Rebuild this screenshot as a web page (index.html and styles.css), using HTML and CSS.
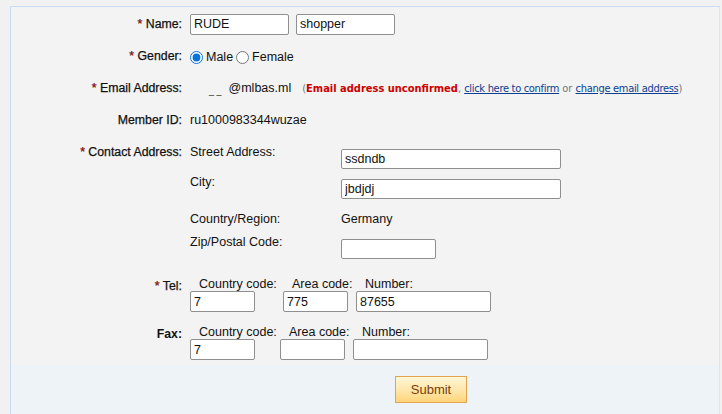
FILE: index.html
```html
<!DOCTYPE html>
<html lang="en">
<head>
    <meta charset="UTF-8">
    <meta name="viewport" content="width=device-width, initial-scale=1.0">
    <title>My Account - Edit Profile</title>
    <link rel="stylesheet" href="styles.css">
</head>
<body>
    <div class="panel">
        <form class="profile-form">
            <div class="row">
                <label class="field-label"><span class="req">*</span> Name:</label>
                <div class="field">
                    <input class="txt txt-name" type="text" value="RUDE">
                    <input class="txt txt-name" type="text" value="shopper">
                </div>
            </div>

            <div class="row">
                <label class="field-label"><span class="req">*</span> Gender:</label>
                <div class="field">
                    <label class="radio"><input type="radio" name="gender" checked>Male</label>
                    <label class="radio"><input type="radio" name="gender">Female</label>
                </div>
            </div>

            <div class="row">
                <label class="field-label"><span class="req">*</span> Email Address:</label>
                <div class="field">
                    <span class="email-value"><span class="email-user">_ _</span>@mlbas.ml</span>
                    <span class="email-note">(<span class="warn">Email address unconfirmed</span>, <a href="#">click here to confirm</a> or <a href="#">change email address</a>)</span>
                </div>
            </div>

            <div class="row">
                <label class="field-label">Member ID:</label>
                <div class="field member-id">ru1000983344wuzae</div>
            </div>

            <div class="row row-top row-address">
                <label class="field-label"><span class="req">*</span> Contact Address:</label>
                <div class="address">
                    <span class="sub-label">Street Address:</span>
                    <input class="txt txt-long" type="text" value="ssdndb">
                    <span class="sub-label">City:</span>
                    <input class="txt txt-long" type="text" value="jbdjdj">
                    <span class="sub-label sub-label-mid">Country/Region:</span>
                    <span class="country">Germany</span>
                    <span class="sub-label">Zip/Postal Code:</span>
                    <input class="txt txt-zip" type="text" value="">
                </div>
            </div>

            <div class="row row-top row-phone">
                <label class="field-label"><span class="req">*</span> Tel:</label>
                <div class="phone">
                    <div class="phone-part part-country">
                        <span class="part-label">Country code:</span>
                        <input class="txt txt-code" type="text" value="7">
                    </div>
                    <div class="phone-part part-area">
                        <span class="part-label">Area code:</span>
                        <input class="txt txt-code" type="text" value="775">
                    </div>
                    <div class="phone-part">
                        <span class="part-label">Number:</span>
                        <input class="txt txt-number" type="text" value="87655">
                    </div>
                </div>
            </div>

            <div class="row row-top row-fax">
                <label class="field-label label-bold">Fax:</label>
                <div class="phone">
                    <div class="phone-part part-country part-fax">
                        <span class="part-label">Country code:</span>
                        <input class="txt txt-code" type="text" value="7">
                    </div>
                    <div class="phone-part part-area">
                        <span class="part-label">Area code:</span>
                        <input class="txt txt-code" type="text" value="">
                    </div>
                    <div class="phone-part">
                        <span class="part-label">Number:</span>
                        <input class="txt txt-number" type="text" value="">
                    </div>
                </div>
            </div>
        </form>

        <div class="actions">
            <button class="submit-btn" type="button">Submit</button>
        </div>
    </div>
</body>
</html>
```

FILE: styles.css
```css
body {
    margin: 0;
    padding: 6px 2px 0 10px;
    background: #f1f1f1;
    font-family: 'Liberation Sans', Arial, sans-serif;
    font-size: 12.5px;
    color: #111111;
}

.panel {
    border: 1px solid #c9dbef;
    border-right-color: #dde6f0;
    background: #f3f3f3;
    height: 420px;
    box-sizing: border-box;
}

.profile-form {
    padding-top: 1px;
}

.row {
    display: flex;
    align-items: center;
    min-height: 32px;
}

.row-top {
    align-items: flex-start;
}

.field-label {
    width: 171px;
    flex-shrink: 0;
    padding-right: 8px;
    text-align: right;
    font-size: 12.3px;
    color: #111111;
    -webkit-text-stroke: 0.25px #111111;
}

.label-bold {
    font-weight: bold;
    -webkit-text-stroke: 0;
}

.req {
    color: #d40000;
}

.field {
    display: flex;
    align-items: center;
}

.txt {
    height: 21px;
    box-sizing: border-box;
    border: 1px solid #8f8f8f;
    border-radius: 2px;
    background: #ffffff;
    padding: 0 3px;
    font-family: 'Liberation Sans', Arial, sans-serif;
    font-size: 12.5px;
    color: #111111;
    margin: 0;
    outline: none;
}

.txt-name {
    width: 99px;
    margin-right: 7px;
}

.radio {
    display: inline-flex;
    align-items: center;
    margin-right: 3px;
    margin-top: 1px;
}

.radio input {
    margin: 1px 3px 0 0;
    width: 13px;
    height: 13px;
    accent-color: #0a74da;
}

.email-user {
    display: inline-block;
    padding: 0 7px 0 19px;
    font-size: 9px;
    vertical-align: -2px;
}

.email-note {
    margin-left: 11px;
    color: #777777;
    font-family: 'DejaVu Sans Condensed', 'DejaVu Sans', sans-serif;
    font-stretch: condensed;
    font-size: 11px;
}

.warn {
    color: #cc0000;
    font-weight: bold;
}

.email-note a {
    color: #0b3d91;
    letter-spacing: -0.3px;
}

/* contact address block */
.row-address {
    margin-top: 9px;
}

.address {
    display: grid;
    grid-template-columns: 151px auto;
    grid-auto-rows: 20px;
    row-gap: 10px;
    padding-top: 4px;
}

.sub-label {
    margin-top: -4px;
}

.sub-label-mid,
.country {
    margin-top: 0;
    align-self: center;
}

.txt-long {
    width: 220px;
    height: 20px;
}

.txt-zip {
    width: 95px;
    height: 20px;
}

/* tel / fax */
.row-phone {
    margin-top: 18px;
}

.row-phone .field-label,
.row-fax .field-label {
    padding-top: 2px;
}

.row-fax {
    margin-top: 13px;
}

.phone {
    display: flex;
}

.phone-part {
    display: flex;
    flex-direction: column;
}

.part-country {
    width: 93px;
}

.part-fax {
    width: 90px;
}

.part-area {
    width: 73px;
}

.part-label {
    padding-left: 9px;
    line-height: 14px;
}

.txt-code {
    width: 65px;
}

.txt-number {
    width: 135px;
}

/* bottom bar */
.actions {
    margin-top: 5px;
    background: #eef3f7;
    padding: 11px 0 20px 384px;
}

.submit-btn {
    width: 72px;
    height: 27px;
    border: 1px solid #e2a450;
    background: linear-gradient(#fff6d6, #ffe6a8 55%, #ffd47a);
    font-family: 'Liberation Sans', Arial, sans-serif;
    font-size: 13px;
    color: #7a3c08;
    padding: 0;
    cursor: pointer;
}
```
